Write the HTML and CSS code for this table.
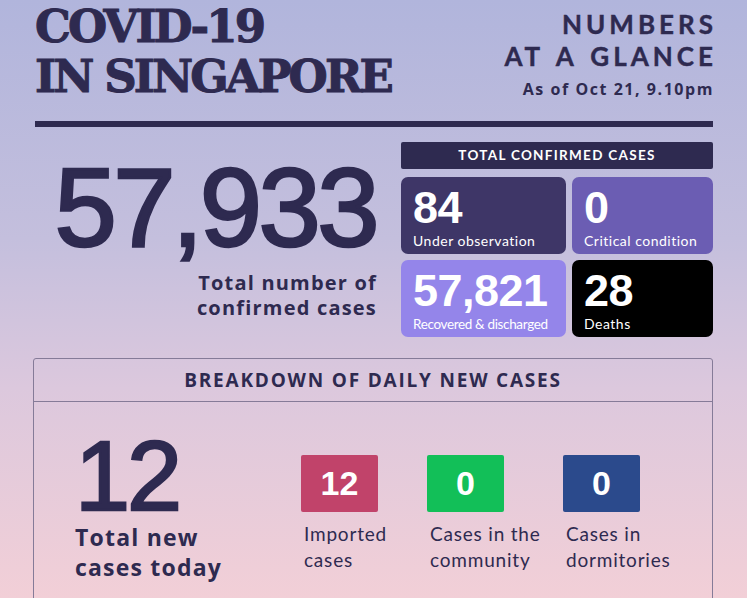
FILE: index.html
```html
<!DOCTYPE html>
<html lang="en">
<head>
<meta charset="utf-8">
<title>COVID-19 in Singapore</title>
<link rel="stylesheet" href="styles.css">
</head>
<body>
<div class="page">
  <header class="header">
    <h1 class="title">COVID-19<br>IN SINGAPORE</h1>
    <div class="glance">
      <div class="glance-title">NUMBERS<br>AT A GLANCE</div>
      <div class="glance-date">As of Oct 21, 9.10pm</div>
    </div>
  </header>
  <div class="rule"></div>

  <section class="summary">
    <div class="total">
      <div class="total-num">57,933</div>
      <div class="total-label">Total number of<br>confirmed cases</div>
    </div>
    <div class="status">
      <div class="status-bar">TOTAL CONFIRMED CASES</div>
      <div class="cards">
        <div class="card card-obs"><div class="card-num">84</div><div class="card-label">Under observation</div></div>
        <div class="card card-crit"><div class="card-num">0</div><div class="card-label">Critical condition</div></div>
        <div class="card card-rec"><div class="card-num">57,821</div><div class="card-label">Recovered &amp; discharged</div></div>
        <div class="card card-death"><div class="card-num">28</div><div class="card-label">Deaths</div></div>
      </div>
    </div>
  </section>

  <section class="breakdown">
    <div class="breakdown-head">BREAKDOWN OF DAILY NEW CASES</div>
    <div class="breakdown-body">
      <div class="today">
        <div class="today-num">12</div>
        <div class="today-label">Total new<br>cases today</div>
      </div>
      <div class="kinds">
        <div class="kind"><div class="kind-box kind-imported">12</div><div class="kind-label">Imported<br>cases</div></div>
        <div class="kind"><div class="kind-box kind-community">0</div><div class="kind-label">Cases in the<br>community</div></div>
        <div class="kind"><div class="kind-box kind-dorm">0</div><div class="kind-label">Cases in<br>dormitories</div></div>
      </div>
    </div>
  </section>
</div>
</body>
</html>
```

FILE: styles.css
```css
html, body {
  margin: 0;
  padding: 0;
}
body {
  width: 747px;
  height: 598px;
  overflow: hidden;
  background: linear-gradient(180deg, #b1b5dc 0%, #c4bfdd 40%, #dcc8dd 65%, #f2cfd7 100%);
  color: #2e2a50;
  font-family: "Lato", "Liberation Sans", sans-serif;
}
.page {
  padding: 0 34px 0 35px;
}
.header {
  display: flex;
  justify-content: space-between;
  align-items: flex-start;
  height: 121px;
}
.title {
  margin: 0;
  padding-top: 2px;
  font-family: "DejaVu Serif", "Liberation Serif", serif;
  font-weight: 700;
  font-size: 45px;
  line-height: 50px;
  letter-spacing: -2.9px;
  color: #2e2a50;
  -webkit-text-stroke: 1px #2e2a50;
}
.glance {
  text-align: right;
  padding-top: 8px;
}
.glance-title {
  font-weight: 700;
  font-size: 26px;
  line-height: 32px;
  letter-spacing: 4px;
  word-spacing: 3px;
  margin-right: -4px;
  -webkit-text-stroke: 0.4px #2e2a50;
}
.glance-date {
  font-family: "Open Sans", "Lato", sans-serif;
  font-weight: 700;
  font-size: 16px;
  line-height: 22px;
  letter-spacing: 1.55px;
  margin-top: 6px;
  margin-right: -1px;
}
.rule {
  height: 6px;
  background: #2e2a50;
}

.summary {
  display: flex;
  gap: 25px;
  margin-top: 15px;
}
.total {
  width: 341px;
  text-align: right;
  padding-top: 10px;
}
.total-num {
  font-family: "Liberation Sans", Arial, sans-serif;
  font-size: 112px;
  line-height: 112px;
  letter-spacing: -3.5px;
  margin-right: 0;
  -webkit-text-stroke: 2.6px #2e2a50;
}
.total-label {
  font-family: "Open Sans", "Lato", sans-serif;
  font-weight: 700;
  font-size: 20px;
  line-height: 25px;
  letter-spacing: 1.2px;
  margin-top: 6px;
  margin-right: -1px;
}
.status {
  width: 312px;
}
.status-bar {
  height: 27px;
  line-height: 27px;
  background: #2e2a50;
  color: #fff;
  text-align: center;
  font-weight: 700;
  font-size: 13.5px;
  letter-spacing: 1.3px;
  border-radius: 2px;
}
.cards {
  display: grid;
  grid-template-columns: 165px 141px;
  grid-auto-rows: 77px;
  gap: 6px;
  margin-top: 8px;
}
.card {
  border-radius: 7px;
  color: #fff;
  padding: 6px 0 0 12px;
}
.card-num {
  font-family: "Liberation Sans", Arial, sans-serif;
  font-weight: 700;
  font-size: 45px;
  line-height: 50px;
  letter-spacing: -0.5px;
}
.card-label {
  font-size: 14px;
  line-height: 16px;
  letter-spacing: 0.5px;
  white-space: nowrap;
}
.card-rec .card-label {
  letter-spacing: -0.35px;
  font-size: 13.5px;
}
.card-obs { background: #3e3667; }
.card-crit { background: #6b5db3; }
.card-rec { background: #9485ea; }
.card-death { background: #000; }

.breakdown {
  margin: 21px 0 0 -2px;
  border: 1px solid #857b98;
  border-radius: 3px;
  height: 260px;
}
.breakdown-head {
  height: 42px;
  line-height: 42px;
  border-bottom: 1px solid #857b98;
  text-align: center;
  font-family: "Open Sans", "Lato", sans-serif;
  font-weight: 700;
  font-size: 19px;
  letter-spacing: 1.8px;
}
.breakdown-body {
  display: flex;
  padding: 24px 0 0 41px;
}
.today {
  width: 226px;
}
.today-num {
  font-family: "Liberation Sans", Arial, sans-serif;
  font-size: 99px;
  line-height: 99px;
  letter-spacing: -3px;
  -webkit-text-stroke: 2.4px #2e2a50;
}
.today-label {
  font-family: "Open Sans", "Lato", sans-serif;
  font-weight: 700;
  font-size: 23px;
  line-height: 30px;
  letter-spacing: 1.2px;
  margin-top: -3px;
}
.kinds {
  display: grid;
  grid-template-columns: 126px 136px 140px;
  padding-top: 29px;
}
.kind-box {
  width: 77px;
  height: 57px;
  border-radius: 2px;
  color: #fff;
  text-align: center;
  line-height: 57px;
  font-family: "Liberation Sans", Arial, sans-serif;
  font-weight: 700;
  font-size: 34px;
}
.kind-imported { background: #c1436a; }
.kind-community { background: #12bf58; }
.kind-dorm { background: #2b4a8c; }
.kind-label {
  margin-top: 9px;
  padding-left: 3px;
  font-size: 19px;
  line-height: 26px;
  letter-spacing: 0.8px;
}
```
